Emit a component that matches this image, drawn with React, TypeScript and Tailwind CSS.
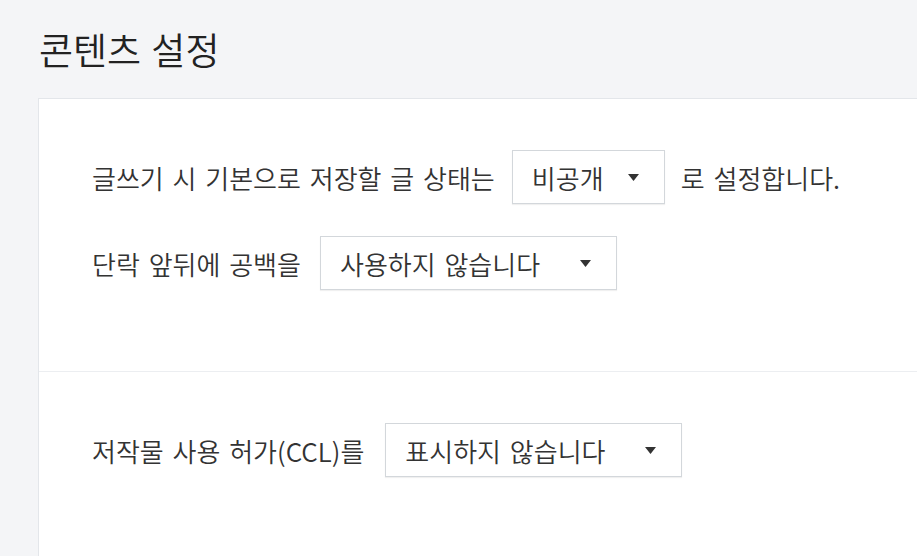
import React from "react";

function Caret() {
  return (
    <svg width="11" height="7" viewBox="0 0 11 7" className="shrink-0">
      <path d="M0 0 L11 0 L5.5 7 Z" fill="#333333" />
    </svg>
  );
}

function Select({ label, width }: { label: string; width: string }) {
  return (
    <div
      className={`flex h-[54px] items-center justify-between border border-[#d3d7db] bg-white pl-[19px] pr-[25px] shadow-[0_1px_1px_rgba(0,0,0,0.06)] ${width}`}
    >
      <span>{label}</span>
      <Caret />
    </div>
  );
}

export default function App() {
  return (
    <div
      className="min-h-[556px] w-[917px] overflow-hidden bg-[#f4f5f7] text-[#333333]"
      style={{ fontFamily: '"Noto Sans CJK KR", "Noto Sans", sans-serif' }}
    >
      <h1 className="pl-[39px] pt-[20px] text-[37px] font-[350] leading-[58px] [word-spacing:2px] text-[#222222]">
        콘텐츠 설정
      </h1>
      <div className="ml-[38px] mt-[20px] border-l border-t border-[#e3e6ea] bg-white text-[26px] font-[350] [word-spacing:3px]">
        <div className="flex flex-col gap-[32px] pb-[81px] pl-[53px] pt-[51px]">
          <div className="flex items-center gap-[17px]">
            <span>글쓰기 시 기본으로 저장할 글 상태는</span>
            <Select label="비공개" width="w-[153px]" />
            <span className="-ml-px">로 설정합니다.</span>
          </div>
          <div className="flex items-center gap-[19px]">
            <span>단락 앞뒤에 공백을</span>
            <Select label="사용하지 않습니다" width="w-[297px]" />
          </div>
        </div>
        <div className="border-t border-[#eceef1] pb-[80px] pl-[53px] pt-[51px]">
          <div className="flex items-center gap-[21px]">
            <span>저작물 사용 허가(CCL)를</span>
            <Select label="표시하지 않습니다" width="w-[297px]" />
          </div>
        </div>
      </div>
    </div>
  );
}
